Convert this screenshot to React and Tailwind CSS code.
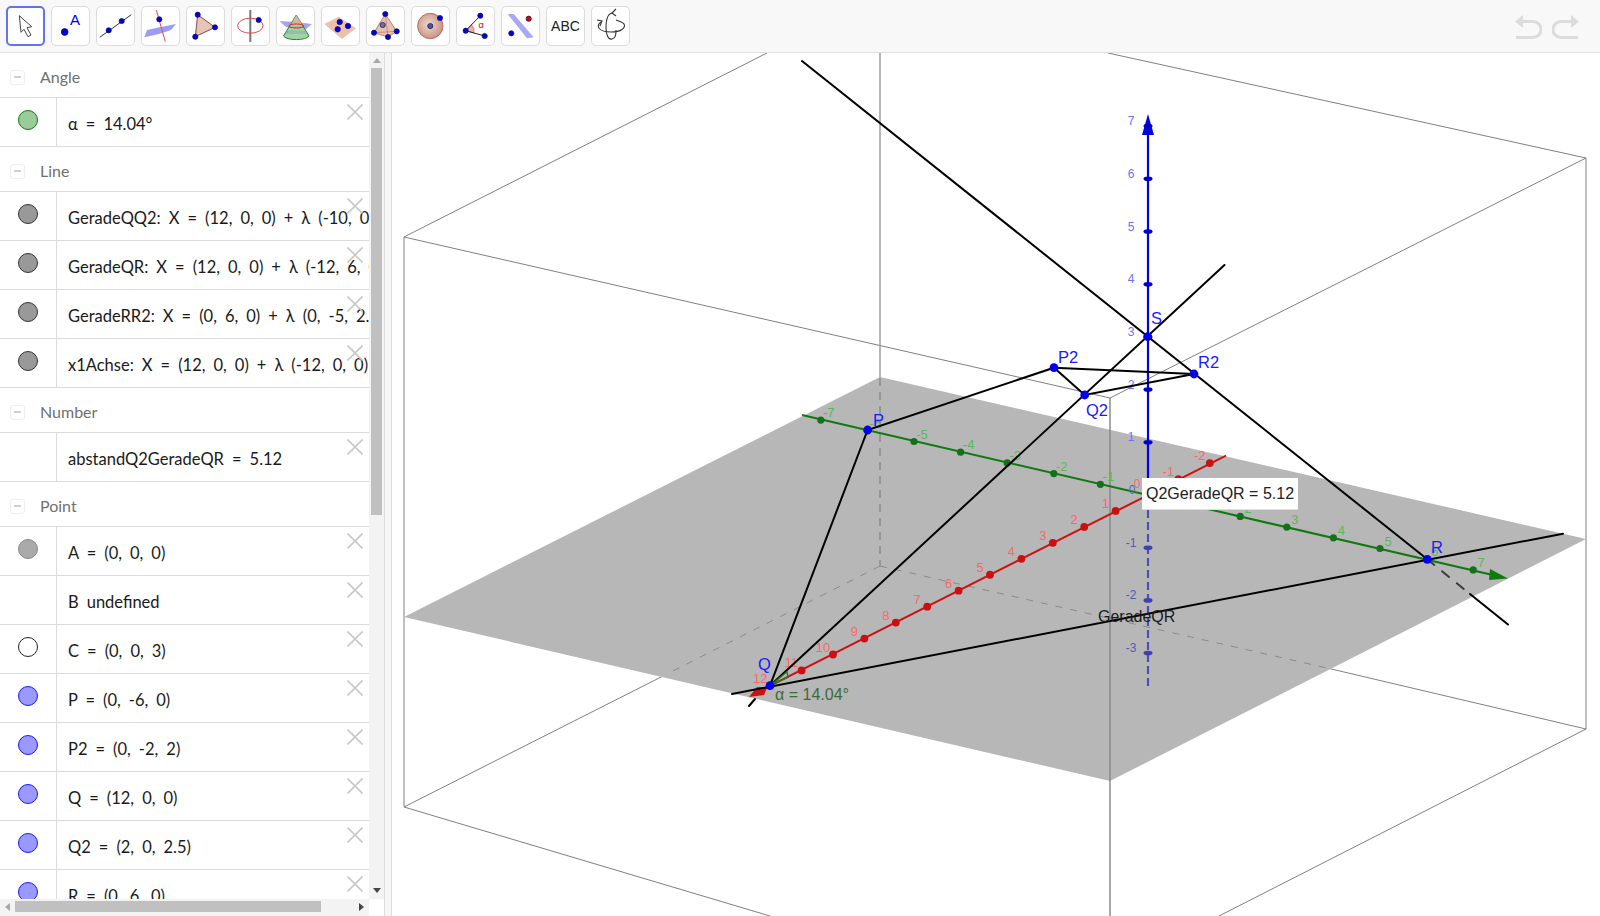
import React from 'react'

const Pt = ({ x, y, r = 2.6, fill = '#0000e6' }) => (
  <circle cx={x} cy={y} r={r} fill={fill} stroke="#10104a" strokeWidth="0.7" />
)

const icons = [
  <path d="M13.3 9.7 L15 26.3 L18 23.3 L22 30.7 L25 29 L21 21.7 L25.7 20.7 Z" fill="#fff" stroke="#444" strokeWidth="1" />,
  <>
    <Pt x={13.7} y={26} r={3.4} />
    <text x="19" y="19" fontSize="15" fill="#0000e6" fontFamily="Liberation Sans">A</text>
  </>,
  <>
    <line x1="3.7" y1="31.3" x2="35.3" y2="8.7" stroke="#333" strokeWidth="1" />
    <Pt x={12.7} y={24.3} />
    <Pt x={25.7} y={15} />
  </>,
  <>
    <path d="M3.3 31.3 L6 24 L20 21 L35 18 L30 24 L18 28 Z" fill="#9c9cf5" />
    <line x1="15.3" y1="4" x2="24.3" y2="35.7" stroke="#e05050" strokeWidth="1" />
    <Pt x={18.3} y={13.3} />
  </>,
  <>
    <path d="M11.7 8.7 L29 21.3 L9.3 30.7 Z" fill="#e6c4b8" stroke="#8a4a3a" strokeWidth="1" />
    <Pt x={11.7} y={8.7} />
    <Pt x={29} y={21.3} />
    <Pt x={9.3} y={30.7} />
  </>,
  <>
    <ellipse cx="19.3" cy="19.7" rx="12.7" ry="7.5" fill="none" stroke="#ee4444" strokeWidth="1" />
    <line x1="19.3" y1="4" x2="19.3" y2="36" stroke="#777" strokeWidth="2" />
    <Pt x={27.7} y={14} />
  </>,
  <>
    <path d="M3.5 15 L20 16 L36 18 L30 23 L10 21 Z" fill="#a5a5ee" />
    <path d="M20.3 9 L33 30 A13 4.5 0 0 1 7.5 30 Z" fill="#8fcc8f" fillOpacity="0.85" stroke="#2e7d32" strokeWidth="1" />
    <path d="M20.3 9 L27 20 L14 20 Z" fill="#d8b4a8" fillOpacity="0.8" />
    <path d="M10 24 L31 25 L32 28 L9 28 Z" fill="#7f8fd0" fillOpacity="0.35" />
    <ellipse cx="20.3" cy="20" rx="7.5" ry="2" fill="none" stroke="#ee2222" strokeWidth="1" />
  </>,
  <>
    <path d="M3.3 18 L17.7 10.7 L35 22.3 L21 33 Z" fill="#ecc0aa" />
    <Pt x={18.7} y={16} r={2.7} />
    <Pt x={27} y={20} r={2.7} />
    <Pt x={16.7} y={23.3} r={2.7} />
  </>,
  <>
    <path d="M19.3 8 L8 26.7 L22 31 L30.7 25.3 Z" fill="#e6c2b4" stroke="#b86a58" strokeWidth="0.8" />
    <path d="M19.3 8 L22 31 M8 26.7 L30.7 25.3" stroke="#b86a58" strokeWidth="0.6" />
    <Pt x={16.7} y={19} fill="#6a70a8" />
    <Pt x={19.3} y={8} />
    <Pt x={8} y={26.7} />
    <Pt x={22} y={31} />
    <Pt x={30.7} y={25.3} />
  </>,
  <>
    <defs>
      <radialGradient id="ball" cx="45%" cy="45%" r="60%">
        <stop offset="0%" stopColor="#efd8d0" />
        <stop offset="100%" stopColor="#c88e7e" />
      </radialGradient>
    </defs>
    <circle cx="19.3" cy="20" r="12.7" fill="url(#ball)" stroke="#a85a48" strokeWidth="0.8" />
    <Pt x={19.3} y={20} fill="#4a5a90" />
    <Pt x={29} y={12} />
  </>,
  <>
    <path d="M9.7 24.7 L15.5 18.8 A8.5 8.5 0 0 1 18 26.8 Z" fill="#eeb0a8" stroke="#d05050" strokeWidth="0.6" />
    <path d="M24.3 9.7 L9.7 24.7 L28.7 30" fill="none" stroke="#222" strokeWidth="1" />
    <text x="22.5" y="22" fontSize="9" fill="#e00000" fontFamily="Liberation Sans">α</text>
    <Pt x={9.7} y={24.7} />
    <Pt x={24.3} y={9.7} />
    <Pt x={28.7} y={30} />
  </>,
  <>
    <path d="M6.7 8 L12.7 8 L32.7 31.3 L26 32.3 Z" fill="#a8a8f8" />
    <Pt x={27.7} y={12.7} fill="#e00000" />
    <Pt x={10.3} y={27.3} />
  </>,
  null,
  <g fill="none" stroke="#333" strokeWidth="1.1">
    <path d="M10 16 C4 20 8 26 20 26 C30 26 35 22 33 18 C32 16 28 15 25 14" />
    <path d="M6 14 L11 15 L9 20" />
    <path d="M22 7 C16 7 15 16 15 22 C15 30 18 34 21 33 C25 32 25 28 25 24" />
    <path d="M25 3 L21 7 L25 10" />
  </g>,
]

const Marble = ({ kind }) => {
  const styles = {
    green: 'bg-[#99cc99] border-[#117711]',
    line: 'bg-[#999999] border-[#333333]',
    gray: 'bg-[#aaaaaa] border-[#888888]',
    white: 'bg-white border-[#222222]',
    blue: 'bg-[#9999ff] border-[#1a1aee]',
  }
  if (!kind) return null
  return <span className={`block w-[20px] h-[20px] rounded-full border ${styles[kind]}`} />
}

const Row = ({ marble, text }) => (
  <div className="relative flex h-[49px] shrink-0 border-b border-[#dcdcdc]">
    <div className="flex w-[57px] shrink-0 justify-center border-r border-[#dcdcdc] pt-[12px] pr-[1px]">
      <Marble kind={marble} />
    </div>
    <div className="pl-[11px] pt-[14px] w-[312px] overflow-hidden whitespace-nowrap text-[16.5px] leading-[24px] text-[#1a1a1a] font-['Lato',sans-serif] [word-spacing:3.8px]">
      {text}
    </div>
    <svg className="absolute right-[6px] top-[6px]" width="16" height="16" viewBox="0 0 16 16">
      <path d="M0.5 0.5 L15.5 15.5 M15.5 0.5 L0.5 15.5" stroke="#c8c8c8" strokeWidth="1.6" />
    </svg>
  </div>
)

const Group = ({ name }) => (
  <div className="flex h-[45px] shrink-0 items-center border-b border-[#dcdcdc] pl-[10px] pt-[4px]">
    <span className="flex h-[15px] w-[15px] items-center justify-center rounded-[3px] border border-[#eeeeee]">
      <span className="block h-[2px] w-[7px] bg-[#d0d0d0]" />
    </span>
    <span className="ml-[15px] text-[16px] text-[#707070] font-['Lato',sans-serif]">{name}</span>
  </div>
)

const greenTicks = [-7, -6, -5, -4, -3, -2, -1, 1, 2, 3, 4, 5, 6, 7]
const redTicks = [-2, -1, 1, 2, 3, 4, 5, 6, 7, 8, 9, 10, 11, 12]
const blueTicks = [7, 6, 5, 4, 3, 2, 1, -1, -2, -3]

const points = [
  ['P', 867.6, 430, 873, 426],
  ['P2', 1054, 367.7, 1058, 363],
  ['Q2', 1084.7, 395, 1086, 416],
  ['R2', 1194, 374, 1198, 368],
  ['S', 1147.7, 336.7, 1151, 324],
  ['Q', 770, 685.7, 758, 670],
  ['R', 1427.3, 559.3, 1431, 553],
]

const Scene = () => (
  <svg className="block" width="1208" height="863" viewBox="392 53 1208 863" fontFamily="Liberation Sans">
    {/* box, back edges */}
    <g stroke="#808080" strokeWidth="1" fill="none">
      <path d="M404 237 L767 53 M404 237 L404 807 M404 237 L1110 398 M1586 158 L1108 53 M1586 158 L1110 398 M1586 158 L1586 729" />
      <path d="M404 807 L770 916 M1586 729 L1219 916 M404 807 L667 674 M1327 668 L1586 729" />
      <path d="M880 53 L880 378" stroke="#999" strokeWidth="1.4" />
    </g>

    <polygon points="880,377 1586,539 1110,781 404,617" fill="#b7b7b7" />

    <g fill="none">
      <path d="M880 378 L880 566" stroke="#8c8c8c" strokeWidth="1.5" strokeDasharray="8 6" />
      <path d="M880 566 L667 674 M880 566 L1327 668" stroke="#8a8a8a" strokeWidth="1" strokeDasharray="7 8" />
      <path d="M1110 398 L1110 916" stroke="#858585" strokeWidth="1.4" />
    </g>

    {/* axes */}
    <line x1="1148" y1="130" x2="1148" y2="500" stroke="#0000e0" strokeWidth="2.2" />
    <line x1="1148" y1="510" x2="1148" y2="686" stroke="#4a50b8" strokeWidth="2.2" strokeDasharray="8 4" />
    <polygon points="1148,114 1142,135 1154,135" fill="#0000e0" />
    {blueTicks.map((n) => {
      const y = 495 - 52.7 * n
      return (
        <g key={n}>
          <ellipse cx="1148" cy={y} rx="4.5" ry="2.3" fill={n > 0 ? '#0000d0' : '#3c42b0'} />
          <text x="1131" y={y - 1} fontSize="12" textAnchor="middle" fill={n > 0 ? '#6f6fff' : '#5358b8'}>{n}</text>
        </g>
      )
    })}

    <line x1="802" y1="415" x2="1495" y2="575.5" stroke="#0f7a0f" strokeWidth="2" />
    <polygon points="1490,569 1508,578.6 1489,580" fill="#0f7a0f" />
    {greenTicks.map((n) => {
      const x = 1147 + 46.6 * n
      const y = 495 + 10.7 * n
      return (
        <g key={n}>
          <circle cx={x} cy={y} r="3.6" fill="#14701a" />
          <text x={x + 8} y={y - 3} fontSize="13" textAnchor="middle" fill="#5cb85c">{n}</text>
        </g>
      )
    })}

    <line x1="760" y1="691" x2="1226" y2="455.7" stroke="#d01010" strokeWidth="2" />
    <polygon points="749,697 757,687 767,688 764,695" fill="#d01010" />
    {redTicks.map((n) => {
      const x = 1147 - 31.4 * n
      const y = 495 + 15.95 * n
      return (
        <g key={n}>
          {n < 12 && <circle cx={x} cy={y} r="3.9" fill="#cc1010" />}
          <text x={x - 10} y={y - 3} fontSize="13" textAnchor="middle" fill="#ff6666">{n}</text>
        </g>
      )
    })}
    <text x="1137" y="488" fontSize="12" textAnchor="middle" fill="#ff6666">0</text>
    <text x="1132" y="494" fontSize="12" textAnchor="middle" fill="#4c6cc8">0</text>

    {/* construction lines */}
    <g stroke="#000" strokeWidth="2" fill="none" strokeLinecap="round">
      <path d="M802 61 L1427.3 559.3" />
      <path d="M1470 594 L1508 624.5" />
      <path d="M1427.3 559.3 L1470 594" stroke="#3a3a3a" strokeDasharray="9 10" />
      <path d="M770 685.7 L1224.5 265" />
      <path d="M749 706 L755 699" />
      <path d="M732 694 L1563 533.7" />
      <path d="M770 685.7 L867.6 430 L1054 367.7 L1084.7 395 L1194 374 L1054 367.7" />
    </g>

    <path d="M770 685.7 L787 671.7 L788 677 Z" fill="none" stroke="#1e7a1e" strokeWidth="1.4" />

    {points.map(([name, x, y, lx, ly]) => (
      <g key={name}>
        <circle cx={x} cy={y} r="4.4" fill="#0000ee" />
        <text x={lx} y={ly} fontSize="16.5" fill="#1a1aff">{name}</text>
      </g>
    ))}

    <text x="775" y="700" fontSize="16" fill="#3b6b3b">α = 14.04°</text>
    <text x="1098" y="622" fontSize="16" fill="#1a1a1a">GeradeQR</text>
  </svg>
)

const App = () => {
  return (
    <div className="flex h-[916px] w-[1600px] flex-col overflow-hidden bg-white font-['Liberation_Sans',sans-serif]">
      <header className="flex h-[53px] shrink-0 items-start gap-[6px] border-b border-[#e0e0e0] bg-[#f8f8f8] pl-[6px] pt-[6px]">
        {icons.map((icon, index) => (
          <button
            key={index}
            className={`flex h-[40px] w-[39px] shrink-0 items-center justify-center rounded-[5px] bg-white ${
              index === 0 ? 'border-2 border-[#6272f0]' : 'border border-[#dcdcdc]'
            }`}
          >
            {icon ? (
              <svg className="shrink-0" width="39" height="40" viewBox="0 0 39 40">
                {icon}
              </svg>
            ) : (
              <span className="text-[14px] text-[#222222]">ABC</span>
            )}
          </button>
        ))}
        <div className="ml-auto mr-[21px] mt-[9px] flex gap-[10px]">
          <svg width="27" height="24" viewBox="0 0 27 24" fill="none">
            <path d="M7 6.5 H18 A8 8 0 0 1 18 22.5 H1" stroke="#dcdcdc" strokeWidth="3" />
            <path d="M0 6.5 L8 0 V13 Z" fill="#dcdcdc" />
          </svg>
          <svg width="27" height="24" viewBox="0 0 27 24" fill="none">
            <path d="M20 6.5 H9 A8 8 0 0 0 9 22.5 H26" stroke="#dcdcdc" strokeWidth="3" />
            <path d="M27 6.5 L19 0 V13 Z" fill="#dcdcdc" />
          </svg>
        </div>
      </header>

      <main className="flex min-h-0 flex-1">
        <aside className="flex w-[384px] shrink-0 flex-col">
          <div className="flex h-[846px] shrink-0">
            <div className="flex w-[369px] shrink-0 flex-col overflow-hidden">
              <Group name="Angle" />
              <Row marble="green" text="α = 14.04°" />
              <Group name="Line" />
              <Row marble="line" text="GeradeQQ2: X = (12, 0, 0) + λ (-10, 0, 2.5)" />
              <Row marble="line" text="GeradeQR: X = (12, 0, 0) + λ (-12, 6, 0)" />
              <Row marble="line" text="GeradeRR2: X = (0, 6, 0) + λ (0, -5, 2.5)" />
              <Row marble="line" text="x1Achse: X = (12, 0, 0) + λ (-12, 0, 0)" />
              <Group name="Number" />
              <Row text="abstandQ2GeradeQR = 5.12" />
              <Group name="Point" />
              <Row marble="gray" text="A = (0, 0, 0)" />
              <Row text="B undefined" />
              <Row marble="white" text="C = (0, 0, 3)" />
              <Row marble="blue" text="P = (0, -6, 0)" />
              <Row marble="blue" text="P2 = (0, -2, 2)" />
              <Row marble="blue" text="Q = (12, 0, 0)" />
              <Row marble="blue" text="Q2 = (2, 0, 2.5)" />
              <Row marble="blue" text="R = (0, 6, 0)" />
            </div>
            <div className="flex w-[15px] shrink-0 flex-col items-center bg-[#f3f3f3]">
              <span className="mt-[5px] h-0 w-0 border-x-[4px] border-b-[5px] border-x-transparent border-b-[#a8a8a8]" />
              <span className="mt-[5px] h-[447px] w-[11px] bg-[#c0c0c0]" />
              <span className="mt-auto mb-[6px] h-0 w-0 border-x-[4px] border-t-[5px] border-x-transparent border-t-[#444444]" />
            </div>
          </div>
          <div className="flex h-[17px] w-[369px] shrink-0 items-start bg-[#f3f3f3] pt-[2px]">
            <span className="ml-[5px] mt-[2px] h-0 w-0 border-y-[4px] border-r-[5px] border-y-transparent border-r-[#a8a8a8]" />
            <span className="ml-[5px] h-[11px] w-[306px] bg-[#c0c0c0]" />
            <span className="ml-auto mr-[5px] mt-[2px] h-0 w-0 border-y-[4px] border-l-[5px] border-y-transparent border-l-[#444444]" />
          </div>
        </aside>

        <div className="w-[8px] shrink-0 border-x border-[#dcdcdc] bg-[#f6f6f6]" />

        <section className="relative min-w-0 flex-1 overflow-hidden">
          <Scene />
          <div className="absolute left-[750px] top-[425px] flex h-[32px] w-[156px] items-center justify-center border-b border-[#dddddd] bg-white text-[16px] text-[#222222]">
            Q2GeradeQR = 5.12
          </div>
        </section>
      </main>
    </div>
  )
}

export default App
